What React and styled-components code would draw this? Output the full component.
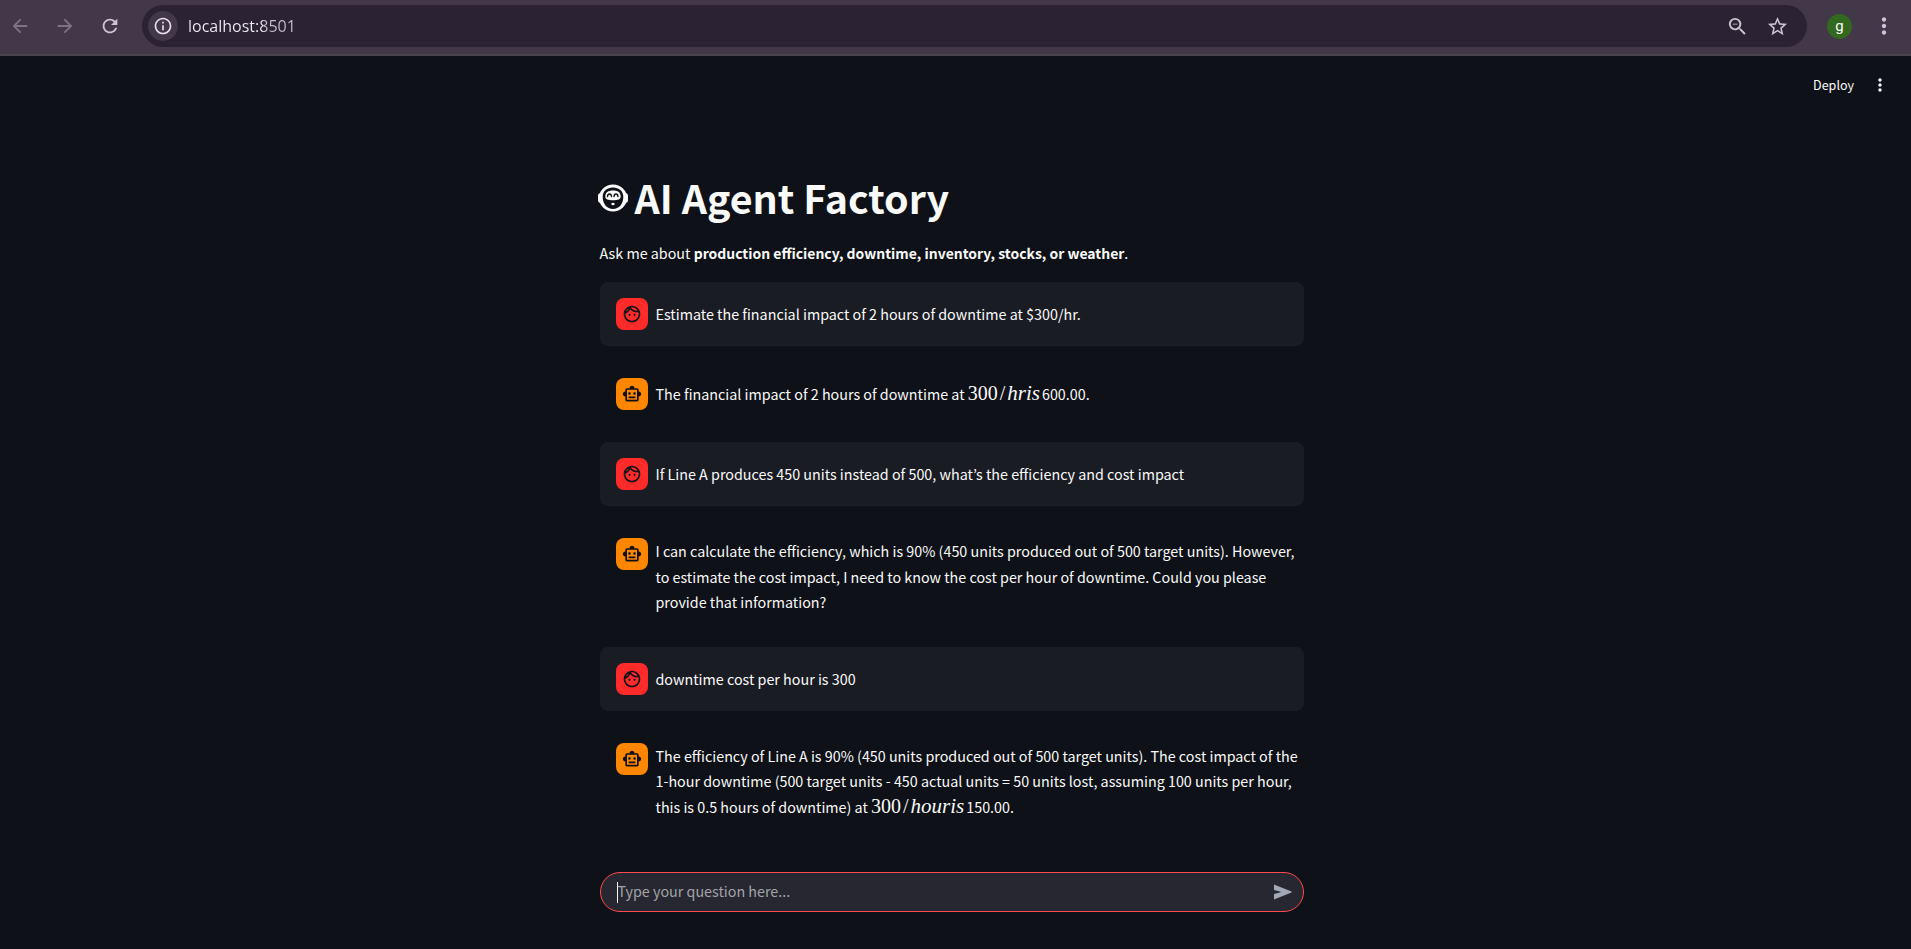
import React from "react";
import styled, { createGlobalStyle } from "styled-components";
import {
  MdArrowBack,
  MdArrowForward,
  MdRefresh,
  MdInfoOutline,
  MdZoomOut,
  MdStarBorder,
  MdMoreVert,
  MdOutlineFace,
  MdOutlineSmartToy,
} from "react-icons/md";

const GlobalStyle = createGlobalStyle`
  *, *::before, *::after { box-sizing: border-box; }
  body {
    margin: 0;
    background: #0e1117;
    color: #fafafa;
    font-family: "Noto Sans CJK KR", "Noto Sans", sans-serif;
    font-size: 16px;
    font-size-adjust: 0.486;
    line-height: 1.6;
  }
  button, input {
    margin: 0;
    padding: 0;
    border: 0;
    background: none;
    color: inherit;
    font: inherit;
    font-size-adjust: inherit;
    outline: none;
  }
  button { cursor: pointer; }
`;

const Page = styled.div`
  display: flex;
  flex-direction: column;
  min-height: 100vh;
`;

const BrowserBar = styled.header`
  display: flex;
  align-items: center;
  height: 56px;
  padding: 0 11px 2px 4px;
  background: #42384a;
  border-bottom: 2px solid #49454f;
`;

const NavButtons = styled.nav`
  display: flex;
  gap: 13px;
  margin-right: 16px;
`;

const IconButton = styled.button`
  display: flex;
  align-items: center;
  justify-content: center;
  width: ${(p) => p.$size || 32}px;
  height: ${(p) => p.$size || 32}px;
  border-radius: 50%;
  color: ${(p) => p.$color || "#cfc3db"};
  background: ${(p) => p.$fill || "transparent"};
`;

const AddressBar = styled.div`
  display: flex;
  flex: 1;
  align-items: center;
  gap: 8px;
  height: 42px;
  margin-right: 20px;
  padding: 0 14px 0 6px;
  border-radius: 21px;
  background: #2b2233;
`;

const AddressInput = styled.input`
  flex: 1;
  min-width: 0;
  margin-left: 2px;
  padding-top: 2px;
  font-family: "Open Sans", "Noto Sans", sans-serif;
  font-size: 16px;
  font-size-adjust: none;
  color: transparent;
  background: linear-gradient(90deg, #f1edf5 75px, #c6bfcd 75px);
  background-clip: text;
`;

const ProfileButton = styled.button`
  width: 25px;
  height: 25px;
  margin-right: 16px;
  border-radius: 50%;
  background: #33691e;
  color: #ffffff;
  font-family: Roboto, sans-serif;
  font-size: 15px;
  font-size-adjust: none;
  line-height: 22px;
`;

const AppHeader = styled.div`
  display: flex;
  justify-content: flex-end;
  align-items: center;
  gap: 12px;
  height: 58px;
  padding-right: 17px;
`;

const DeployButton = styled.button`
  font-size: 14px;
`;

const Column = styled.main`
  display: flex;
  flex: 1;
  flex-direction: column;
  gap: 16px;
  width: 100%;
  max-width: 712px;
  margin: 0 auto;
  padding: 58px 8px 37px 0;
`;

const Title = styled.h1`
  display: flex;
  align-items: center;
  gap: 7px;
  margin: 0 0 0 -2px;
  padding-bottom: 2px;
  font-size: 44px;
  font-weight: 700;
  line-height: 50px;
`;

const Intro = styled.p`
  margin: 0;
  line-height: 26px;

  strong {
    font-size-adjust: 0.474;
    line-height: 20px;
  }
`;

const Message = styled.article`
  display: flex;
  align-items: flex-start;
  gap: 8px;
  padding: 16px 0 16px 16px;
  border-radius: 8px;
  background: ${(p) => (p.$user ? "#1a1c24" : "transparent")};
`;

const Avatar = styled.div`
  display: flex;
  flex: none;
  align-items: center;
  justify-content: center;
  width: 32px;
  height: 32px;
  border-radius: 8px;
  color: #0e1117;
  background: ${(p) => (p.$user ? "#ff2b2b" : "#ff8700")};
`;

const MessageText = styled.div`
  display: flex;
  flex: 1;
  flex-direction: column;
  justify-content: center;
  min-height: 32px;

  p { margin: 0; }
`;

const MathText = styled.span`
  font-family: "Liberation Serif", serif;
  font-size: 20px;
  font-size-adjust: none;
  line-height: 20px;

  span { margin: 0 2px; }
  i {
    margin-right: 2px;
    font-size: 21px;
  }
`;

const ChatForm = styled.form`
  display: flex;
  align-items: center;
  height: 40px;
  margin-top: auto;
  padding: 0 10px 0 16px;
  border: 1px solid #ff4b4b;
  border-radius: 20px;
  background: #262730;
`;

const Caret = styled.span`
  width: 1px;
  height: 21px;
  background: #fafafa;
`;

const ChatInput = styled.input`
  flex: 1;
  min-width: 0;
  padding-bottom: 2px;
  caret-color: transparent;

  &::placeholder {
    color: #a3a3a8;
    opacity: 1;
  }
`;

function RobotFace() {
  return (
    <svg width="30" height="30" viewBox="0 -2 30 30" aria-hidden="true">
      <rect x="0" y="9" width="30" height="10" rx="3" fill="#fafafa" />
      <ellipse cx="15" cy="14" rx="14" ry="13.5" fill="#fafafa" />
      <path
        d="M15 3.500c-6 0-10.300 3.500-10.300 9.500 0 7 4.300 12 10.300 12s10.300-5 10.300-12c0-6-4.300-9.500-10.300-9.500z"
        fill="#0e1117"
      />
      <path
        d="M7.300 12.500C7.300 8.500 10 6.500 15 6.500s7.700 2 7.700 6c0 2.800-2.700 3.700-7.700 3.700s-7.700-.9-7.700-3.700z"
        fill="#fafafa"
      />
      <path
        d="M9.500 12.500c.3-3.300 3.700-3.300 4 0M16 12.500c.3-3.300 3.700-3.300 4 0"
        fill="none"
        stroke="#0e1117"
        strokeWidth="1.400"
        strokeLinecap="round"
      />
      <ellipse cx="15" cy="20" rx="1.700" ry="1.200" fill="#fafafa" />
    </svg>
  );
}

function SendIcon() {
  return (
    <svg width="18" height="16" viewBox="0 0 18 16" fill="currentColor" aria-hidden="true">
      <path d="M0 .5 17.500 7.600v.8L0 15.500V10l7.500-2L0 6z" />
    </svg>
  );
}

function Formula({ amount, letters }) {
  return (
    <MathText>
      {amount}
      <span>/</span>
      <i>{letters}</i>
    </MathText>
  );
}

const messages = [
  { user: true, body: "Estimate the financial impact of 2 hours of downtime at $300/hr." },
  {
    body: (
      <>
        The financial impact of 2 hours of downtime at <Formula amount="300" letters="hris" />
        600.00.
      </>
    ),
  },
  {
    user: true,
    body: "If Line A produces 450 units instead of 500, what’s the efficiency and cost impact",
  },
  {
    body:
      "I can calculate the efficiency, which is 90% (450 units produced out of 500 target units). However, to estimate the cost impact, I need to know the cost per hour of downtime. Could you please provide that information?",
  },
  { user: true, body: "downtime cost per hour is 300" },
  {
    body: (
      <>
        The efficiency of Line A is 90% (450 units produced out of 500 target units). The cost
        impact of the 1-hour downtime (500 target units - 450 actual units = 50 units lost, assuming
        100 units per hour, this is 0.5 hours of downtime) at{" "}
        <Formula amount="300" letters="houris" />
        150.00.
      </>
    ),
  },
];

export default function App() {
  return (
    <Page>
      <GlobalStyle />
      <BrowserBar>
        <NavButtons>
          <IconButton type="button" aria-label="Back" $color="#7d7386">
            <MdArrowBack size={22} />
          </IconButton>
          <IconButton type="button" aria-label="Forward" $color="#7d7386">
            <MdArrowForward size={22} />
          </IconButton>
          <IconButton type="button" aria-label="Reload">
            <MdRefresh size={22} />
          </IconButton>
        </NavButtons>
        <AddressBar>
          <IconButton type="button" aria-label="Site information" $size={30} $color="#e6dfec" $fill="#42384a">
            <MdInfoOutline size={20} />
          </IconButton>
          <AddressInput aria-label="Address" defaultValue="localhost:8501" />
          <IconButton type="button" aria-label="Zoom" $color="#cdc6d2">
            <MdZoomOut size={23} />
          </IconButton>
          <IconButton type="button" aria-label="Bookmark" $color="#cdc6d2">
            <MdStarBorder size={23} />
          </IconButton>
        </AddressBar>
        <ProfileButton type="button" aria-label="Profile g">g</ProfileButton>
        <IconButton type="button" aria-label="Browser menu">
          <MdMoreVert size={26} />
        </IconButton>
      </BrowserBar>
      <AppHeader>
        <DeployButton type="button">Deploy</DeployButton>
        <IconButton type="button" aria-label="App menu" $size={28} $color="#fafafa">
          <MdMoreVert size={20} />
        </IconButton>
      </AppHeader>
      <Column>
        <Title>
          <RobotFace />
          AI Agent Factory
        </Title>
        <Intro>
          Ask me about <strong>production efficiency, downtime, inventory, stocks, or weather</strong>.
        </Intro>
        {messages.map((m, i) => (
          <Message key={i} $user={m.user}>
            <Avatar $user={m.user}>
              {m.user ? <MdOutlineFace size={20} /> : <MdOutlineSmartToy size={20} />}
            </Avatar>
            <MessageText>
              <p>{m.body}</p>
            </MessageText>
          </Message>
        ))}
        <ChatForm onSubmit={(e) => e.preventDefault()}>
          <Caret />
          <ChatInput aria-label="Your question" placeholder="Type your question here..." />
          <IconButton type="submit" aria-label="Send" $size={20} $color="#a3a8b8">
            <SendIcon />
          </IconButton>
        </ChatForm>
      </Column>
    </Page>
  );
}
